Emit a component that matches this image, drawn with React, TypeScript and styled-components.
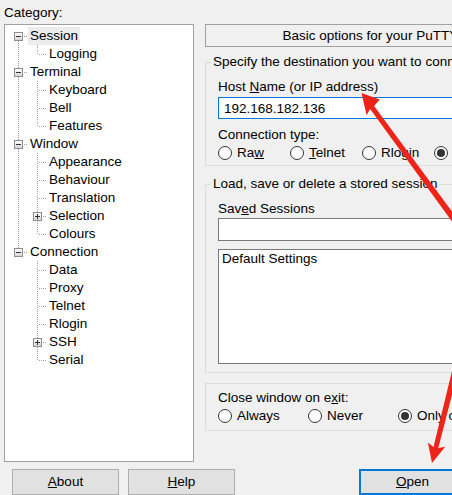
import React, { useId } from 'react';
import styled, { createGlobalStyle } from 'styled-components';

const GlobalStyle = createGlobalStyle`
  html, body { margin: 0; padding: 0; background: #f0f0f0; overflow: hidden; }
  body { font-family: "Liberation Sans", Arial, sans-serif; font-size: 13.5px; color: #000; }
  #root { width: 452px; height: 495px; overflow: hidden; position: relative; }
`;

const Dialog = styled.div`
  width: 600px;
  padding: 5px 0 0 4px;
  line-height: 16px;
  box-sizing: border-box;
`;

const Main = styled.div`
  display: grid;
  grid-template-columns: 190px 380px;
  column-gap: 11px;
  align-items: start;
`;

const LeftCol = styled.div`
  display: flex;
  flex-direction: column;
`;

const CategoryLabel = styled.div`
  line-height: 16px;
  margin-bottom: 3px;
`;

const TreeBox = styled.div`
  height: 438px;
  box-sizing: border-box;
  border: 1px solid #a0a0a0;
  background: #fff;
  padding: 2px 0 0 4px;
`;

const TreeRow = styled.div`
  display: flex;
  height: 18px;
`;

const TreeLabel = styled.span<{ $selected?: boolean }>`
  padding: 0 2px;
  line-height: 18px;
  height: 18px;
  white-space: nowrap;
  background: ${(p) => (p.$selected ? '#ececec' : 'transparent')};
`;

const RightCol = styled.div`
  padding-top: 19px;
  display: flex;
  flex-direction: column;
`;

const HeaderBox = styled.div`
  height: 23px;
  box-sizing: border-box;
  border: 1px solid #a0a0a0;
  display: flex;
  align-items: center;
  justify-content: center;
  white-space: nowrap;
`;

const Group = styled.fieldset<{ $mt: number }>`
  margin: ${(p) => p.$mt}px 0 0;
  padding: 0;
  border: 1px solid #dcdcdc;
  min-width: 0;
`;

const Legend = styled.legend`
  margin-left: 5px;
  padding: 0 2px;
  line-height: 16px;
  white-space: nowrap;
`;

const GroupBody = styled.div<{ $pt: number; $pb: number }>`
  padding: ${(p) => p.$pt}px 12px ${(p) => p.$pb}px 12px;
  display: flex;
  flex-direction: column;
`;

const Label = styled.div<{ $mt?: number }>`
  line-height: 16px;
  white-space: nowrap;
  margin-top: ${(p) => p.$mt ?? 0}px;
`;

const HostRow = styled.div`
  display: flex;
  gap: 10px;
`;

const Field = styled.div<{ $w?: number }>`
  display: flex;
  flex-direction: column;
  ${(p) => (p.$w ? `width: ${p.$w}px; flex: none;` : 'flex: 1;')}
`;

const TextInput = styled.input<{ $focused?: boolean; $h: number; $mt: number }>`
  height: ${(p) => p.$h}px;
  margin-top: ${(p) => p.$mt}px;
  box-sizing: border-box;
  border: 1px solid ${(p) => (p.$focused ? '#0078d7' : '#7a7a7a')};
  background: #fff;
  padding: 0 5px;
  font: inherit;
  color: #000;
  outline: none;
  width: 100%;
`;

const RadioRow = styled.div<{ $col: number; $n: number }>`
  display: grid;
  grid-template-columns: repeat(${(p) => p.$n}, ${(p) => p.$col}px);
  margin-top: 2px;
`;

const RadioItem = styled.label`
  display: flex;
  align-items: center;
  gap: 5px;
  height: 16px;
  white-space: nowrap;
`;

const RadioCircle = styled.span<{ $checked?: boolean }>`
  width: 14px;
  height: 14px;
  flex: none;
  box-sizing: border-box;
  border: 1px solid #333;
  border-radius: 50%;
  background: #fff;
  display: grid;
  place-items: center;
  &::after {
    content: '';
    width: 8px;
    height: 8px;
    border-radius: 50%;
    background: ${(p) => (p.$checked ? '#333' : 'transparent')};
  }
`;

const SessionsArea = styled.div`
  display: flex;
  gap: 9px;
`;

const SessionsLeft = styled.div`
  width: 270px;
  display: flex;
  flex-direction: column;
`;

const ListBox = styled.div`
  height: 115px;
  margin-top: 8px;
  box-sizing: border-box;
  border: 1px solid #7a7a7a;
  background: #fff;
  padding: 1px 3px 0;
  line-height: 16px;
`;

const SideButtons = styled.div`
  display: flex;
  flex-direction: column;
  gap: 8px;
  padding-top: 49px;
`;

const ButtonRow = styled.div`
  display: flex;
  justify-content: space-between;
  width: 570px;
  margin: 7px 0 0 8px;
`;

const ButtonGroup = styled.div`
  display: flex;
  gap: 9px;
`;

const Button = styled.button<{ $default?: boolean; $w?: number; $h?: number }>`
  width: ${(p) => p.$w ?? 107}px;
  height: ${(p) => p.$h ?? 26}px;
  box-sizing: border-box;
  border: 1px solid ${(p) => (p.$default ? '#0078d7' : '#adadad')};
  box-shadow: ${(p) => (p.$default ? 'inset 0 0 0 1px #0078d7' : 'none')};
  background: #e1e1e1;
  font: inherit;
  line-height: 16px;
  color: #000;
  padding: 0;
`;

const Overlay = styled.svg`
  position: absolute;
  left: 0;
  top: 0;
  width: 452px;
  height: 495px;
  pointer-events: none;
`;

type Node = { label: string; children?: Node[]; expanded?: boolean; selected?: boolean };

const tree: Node[] = [
  { label: 'Session', expanded: true, selected: true, children: [{ label: 'Logging' }] },
  {
    label: 'Terminal',
    expanded: true,
    children: [{ label: 'Keyboard' }, { label: 'Bell' }, { label: 'Features' }],
  },
  {
    label: 'Window',
    expanded: true,
    children: [
      { label: 'Appearance' },
      { label: 'Behaviour' },
      { label: 'Translation' },
      { label: 'Selection', children: [{ label: 'Copy' }] },
      { label: 'Colours' },
    ],
  },
  {
    label: 'Connection',
    expanded: true,
    children: [
      { label: 'Data' },
      { label: 'Proxy' },
      { label: 'Telnet' },
      { label: 'Rlogin' },
      { label: 'SSH', children: [{ label: 'Kex' }] },
      { label: 'Serial' },
    ],
  },
];

type Flat = { node: Node; guides: boolean[]; hasNext: boolean; firstRoot: boolean };

function flatten(nodes: Node[], depth: number, guides: boolean[], out: Flat[]) {
  nodes.forEach((n, i) => {
    const hasNext = i < nodes.length - 1;
    out.push({ node: n, guides, hasNext, firstRoot: depth === 0 && i === 0 });
    if (n.children && n.expanded) flatten(n.children, depth + 1, [...guides, hasNext], out);
  });
}

const LINE = '#a0a0a0';

function Guide({ show }: { show: boolean }) {
  return (
    <svg width="19" height="18" style={{ flex: 'none' }}>
      {show && <line x1="9.5" y1="0" x2="9.5" y2="18" stroke={LINE} strokeDasharray="1 1" />}
    </svg>
  );
}

function Connector({ top, bottom, expander, open }: { top: boolean; bottom: boolean; expander: boolean; open?: boolean }) {
  const id = useId().replace(/:/g, '');
  return (
    <svg width="19" height="18" style={{ flex: 'none' }}>
      <defs>
        <linearGradient id={`g${id}`} x1="0" y1="0" x2="0" y2="1">
          <stop offset="0" stopColor="#ffffff" />
          <stop offset="1" stopColor="#d4d4d4" />
        </linearGradient>
      </defs>
      {top && <line x1="9.5" y1="0" x2="9.5" y2="9" stroke={LINE} strokeDasharray="1 1" />}
      {bottom && <line x1="9.5" y1="10" x2="9.5" y2="18" stroke={LINE} strokeDasharray="1 1" />}
      <line x1="11" y1="9.5" x2="19" y2="9.5" stroke={LINE} strokeDasharray="1 1" />
      {expander && (
        <g>
          <rect x="5.5" y="5.5" width="8" height="8" fill={`url(#g${id})`} stroke="#8f8f8f" />
          <line x1="7" y1="9.5" x2="12" y2="9.5" stroke="#333" />
          {!open && <line x1="9.5" y1="7" x2="9.5" y2="12" stroke="#333" />}
        </g>
      )}
    </svg>
  );
}

function Tree() {
  const rows: Flat[] = [];
  flatten(tree, 0, [], rows);
  return (
    <TreeBox>
      {rows.map((r, i) => (
        <TreeRow key={i}>
          {r.guides.map((g, j) => (
            <Guide key={j} show={g} />
          ))}
          <Connector
            top={!r.firstRoot}
            bottom={r.hasNext}
            expander={!!r.node.children}
            open={r.node.expanded}
          />
          <TreeLabel $selected={r.node.selected}>{r.node.label}</TreeLabel>
        </TreeRow>
      ))}
    </TreeBox>
  );
}

function Radio({ checked, children }: { checked?: boolean; children: React.ReactNode }) {
  return (
    <RadioItem>
      <RadioCircle $checked={checked} />
      <span>{children}</span>
    </RadioItem>
  );
}

export default function App() {
  return (
    <>
      <GlobalStyle />
      <Dialog>
        <Main>
          <LeftCol>
            <CategoryLabel>
              Cate<u>g</u>ory:
            </CategoryLabel>
            <Tree />
          </LeftCol>
          <RightCol>
            <HeaderBox>Basic options for your PuTTY session</HeaderBox>
            <Group $mt={7}>
              <Legend>Specify the destination you want to connect to</Legend>
              <GroupBody $pt={9} $pb={4}>
                <HostRow>
                  <Field>
                    <Label>
                      Host <u>N</u>ame (or IP address)
                    </Label>
                    <TextInput $focused $h={22} $mt={2} readOnly value="192.168.182.136" />
                  </Field>
                  <Field $w={72}>
                    <Label>
                      <u>P</u>ort
                    </Label>
                    <TextInput $h={22} $mt={2} readOnly value="22" />
                  </Field>
                </HostRow>
                <Label $mt={8}>Connection type:</Label>
                <RadioRow $col={72} $n={5}>
                  <Radio>
                    Ra<u>w</u>
                  </Radio>
                  <Radio>
                    <u>T</u>elnet
                  </Radio>
                  <Radio>
                    Rlog<u>i</u>n
                  </Radio>
                  <Radio checked>
                    <u>S</u>SH
                  </Radio>
                  <Radio>
                    Se<u>r</u>ial
                  </Radio>
                </RadioRow>
              </GroupBody>
            </Group>
            <Group $mt={10}>
              <Legend>Load, save or delete a stored session</Legend>
              <GroupBody $pt={9} $pb={8}>
                <SessionsArea>
                  <SessionsLeft>
                    <Label>
                      Sav<u>e</u>d Sessions
                    </Label>
                    <TextInput $h={23} $mt={1} readOnly value="" />
                    <ListBox>Default Settings</ListBox>
                  </SessionsLeft>
                  <SideButtons>
                    <Button $w={75} $h={24}>
                      <u>L</u>oad
                    </Button>
                    <Button $w={75} $h={24}>
                      Sa<u>v</u>e
                    </Button>
                    <Button $w={75} $h={24}>
                      <u>D</u>elete
                    </Button>
                  </SideButtons>
                </SessionsArea>
              </GroupBody>
            </Group>
            <Group $mt={10}>
              <GroupBody $pt={6} $pb={6}>
                <Label>
                  Close window on e<u>x</u>it:
                </Label>
                <RadioRow $col={90} $n={3}>
                  <Radio>Always</Radio>
                  <Radio>Never</Radio>
                  <Radio checked>Only on clean exit</Radio>
                </RadioRow>
              </GroupBody>
            </Group>
          </RightCol>
        </Main>
        <ButtonRow>
          <ButtonGroup>
            <Button>
              <u>A</u>bout
            </Button>
            <Button>
              <u>H</u>elp
            </Button>
          </ButtonGroup>
          <ButtonGroup>
            <Button $default>
              <u>O</u>pen
            </Button>
            <Button>
              <u>C</u>ancel
            </Button>
          </ButtonGroup>
        </ButtonRow>
      </Dialog>
      <Overlay viewBox="0 0 452 495">
        <polygon
          fill="#ee2419"
          points="361.5,93 379.8,99.4 374.1,106 467.3,232.2 462.5,235.8 370.1,109 366.6,115.2"
        />
        <polygon
          fill="#ee2419"
          points="432,463 445.3,446.7 438.3,448.1 459.2,366.6 453.4,365.2 433.5,446.9 427.9,442.4"
        />
      </Overlay>
    </>
  );
}
